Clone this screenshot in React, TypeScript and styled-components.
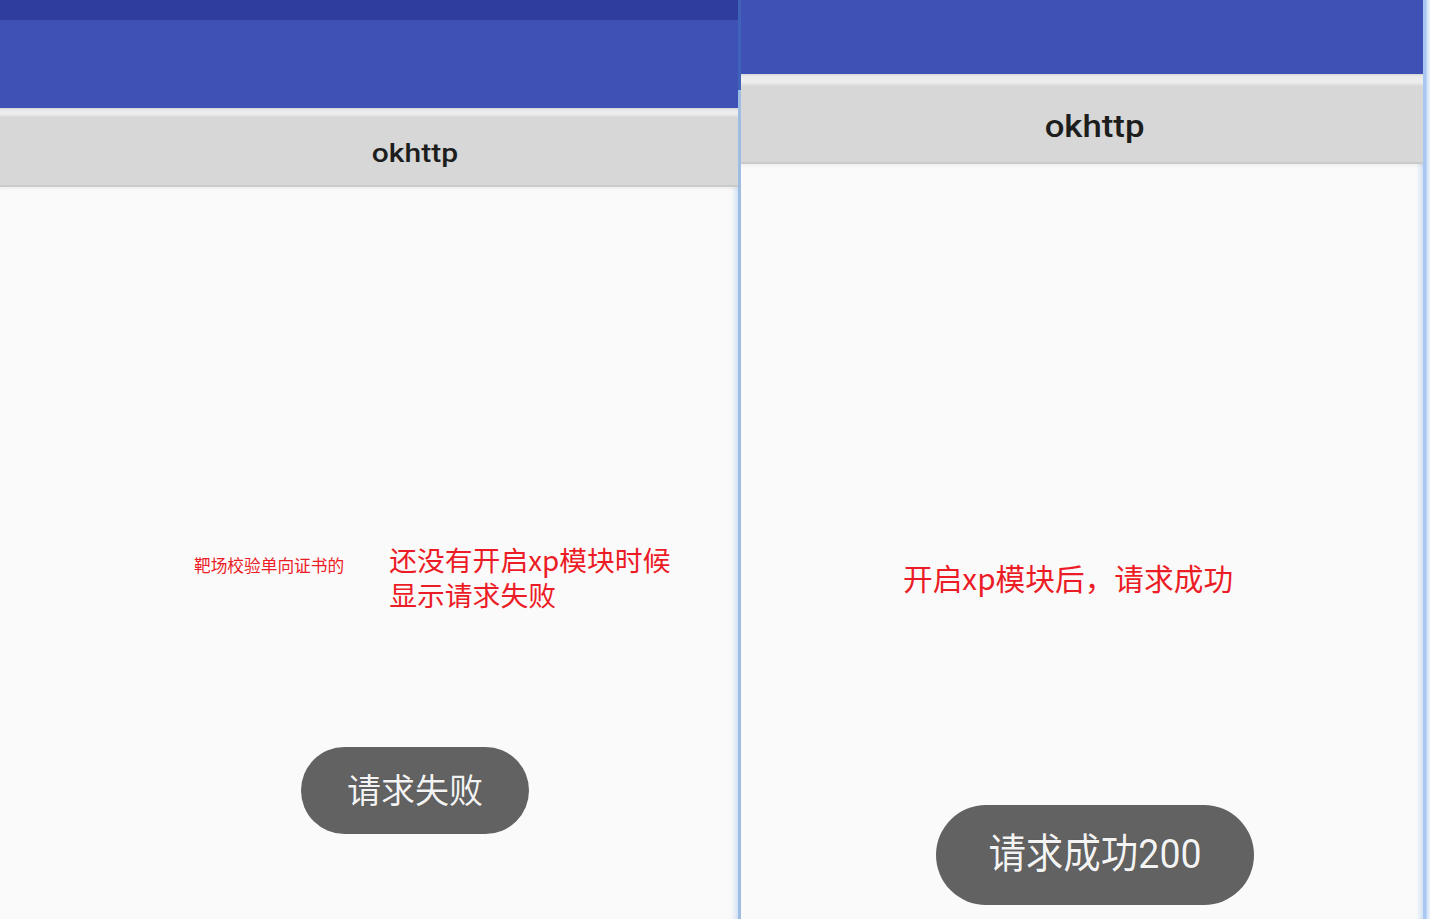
import React from "react";
import styled, { createGlobalStyle } from "styled-components";

const GlobalStyle = createGlobalStyle`
  html, body {
    margin: 0;
    padding: 0;
    background: #fafafa;
  }
  body {
    font-family: Roboto, "Noto Sans CJK SC", sans-serif;
  }
`;

const RED = "#ec1c26";

const Page = styled.div`
  display: flex;
  width: 1430px;
  height: 919px;
  overflow: hidden;
`;

const Viewport = styled.div<{ $w: number }>`
  flex: none;
  width: ${(p) => p.$w}px;
  height: 100%;
  overflow: hidden;
  background: #fafafa;
  box-shadow: inset -6px 0 5px -3px rgba(150, 185, 230, 0.4);
`;

const Screen = styled.div<{ $w: number }>`
  width: ${(p) => p.$w}px;
  height: 100%;
  display: flex;
  flex-direction: column;
`;

const StatusBar = styled.div<{ $h: number }>`
  flex: none;
  height: ${(p) => p.$h}px;
  background: #2f3d9e;
`;

const AppBar = styled.div<{ $h: number }>`
  flex: none;
  height: ${(p) => p.$h}px;
  background: #3f51b5;
`;

const Strip = styled.div<{ $h: number }>`
  flex: none;
  height: ${(p) => p.$h}px;
  background: linear-gradient(#d2d3d3 0, #e9e9e9 2px, #eeeeee 65%, #dadada 100%);
`;

const TitleBar = styled.div<{ $h: number; $pt: number }>`
  flex: none;
  box-sizing: border-box;
  height: ${(p) => p.$h}px;
  padding-top: ${(p) => p.$pt}px;
  background: #d6d7d6;
  border-bottom: 2px solid #c9caca;
  box-shadow: 0 2px 3px rgba(0, 0, 0, 0.05);
  display: flex;
  justify-content: center;
  align-items: center;
  position: relative;
  z-index: 1;
`;

const Title = styled.span<{ $size: number; $sx: number }>`
  display: inline-block;
  font-family: Roboto, "Noto Sans", sans-serif;
  font-weight: 500;
  font-size: ${(p) => p.$size}px;
  line-height: 1;
  color: #1d1d1d;
  transform: scaleX(${(p) => p.$sx});
`;

const Body = styled.div<{ $pt: number }>`
  flex: 1;
  display: flex;
  flex-direction: column;
  padding-top: ${(p) => p.$pt}px;
`;

const NoteRow = styled.div<{ $pl: number; $gap: number }>`
  display: flex;
  align-items: flex-start;
  padding-left: ${(p) => p.$pl}px;
  gap: ${(p) => p.$gap}px;
`;

const SmallNote = styled.span`
  font-family: "Noto Sans CJK SC", sans-serif;
  font-size: 16.7px;
  line-height: 24px;
  margin-top: 11px;
  color: ${RED};
  white-space: nowrap;
`;

const NoteBlock = styled.div`
  display: flex;
  flex-direction: column;
`;

const NoteLine = styled.span<{ $size: number; $lh: number }>`
  display: block;
  font-family: "Noto Sans CJK SC", sans-serif;
  font-size: ${(p) => p.$size}px;
  line-height: ${(p) => p.$lh}px;
  color: ${RED};
  white-space: nowrap;
`;

const Pill = styled.div<{ $w: number; $h: number; $mt: number }>`
  flex: none;
  align-self: center;
  width: ${(p) => p.$w}px;
  height: ${(p) => p.$h}px;
  margin-top: ${(p) => p.$mt}px;
  border-radius: 999px;
  background: #626262;
  display: flex;
  align-items: center;
  justify-content: center;
`;

const PillLabel = styled.span<{ $size: number; $sy: number }>`
  display: inline-block;
  font-family: Roboto, "Noto Sans CJK SC", sans-serif;
  font-size: ${(p) => p.$size}px;
  line-height: 1;
  color: #f3f3f3;
  text-shadow: 0 0 1px rgba(0, 0, 0, 0.35);
  transform: scaleY(${(p) => p.$sy});
  white-space: nowrap;
`;

const Divider = styled.div`
  flex: none;
  width: 3px;
  height: 100%;
  background: linear-gradient(#3f63b9 0, #3f63b9 90px, #9dbde2 90px);
`;

const RightEdge = styled.div`
  flex: none;
  width: 7px;
  height: 100%;
  background: linear-gradient(90deg, #a8c8f1 0, #a8c8f1 3px, #d2e2f7 4px, #eef4fc 100%);
`;

export default function App() {
  return (
    <>
      <GlobalStyle />
      <Page>
        <Viewport $w={738}>
          <Screen $w={830}>
            <StatusBar $h={20} />
            <AppBar $h={88} />
            <Strip $h={9} />
            <TitleBar $h={70} $pt={5}>
              <Title $size={25} $sx={1.2}>okhttp</Title>
            </TitleBar>
            <Body $pt={355}>
              <NoteRow $pl={194} $gap={45}>
                <SmallNote>靶场校验单向证书的</SmallNote>
                <NoteBlock>
                  <NoteLine $size={27.8} $lh={35}>还没有开启xp模块时候</NoteLine>
                  <NoteLine $size={27.8} $lh={35}>显示请求失败</NoteLine>
                </NoteBlock>
              </NoteRow>
              <Pill $w={228} $h={87} $mt={135}>
                <PillLabel $size={34} $sy={1}>请求失败</PillLabel>
              </Pill>
            </Body>
          </Screen>
        </Viewport>
        <Divider />
        <Viewport $w={682}>
          <Screen $w={708}>
            <AppBar $h={74} />
            <Strip $h={12} />
            <TitleBar $h={78} $pt={5}>
              <Title $size={31} $sx={1.12}>okhttp</Title>
            </TitleBar>
            <Body $pt={394}>
              <NoteRow $pl={162} $gap={0}>
                <NoteLine $size={29.7} $lh={40}>开启xp模块后，请求成功</NoteLine>
              </NoteRow>
              <Pill $w={318} $h={100} $mt={207}>
                <PillLabel $size={37.5} $sy={1.1}>请求成功200</PillLabel>
              </Pill>
            </Body>
          </Screen>
        </Viewport>
        <RightEdge />
      </Page>
    </>
  );
}
